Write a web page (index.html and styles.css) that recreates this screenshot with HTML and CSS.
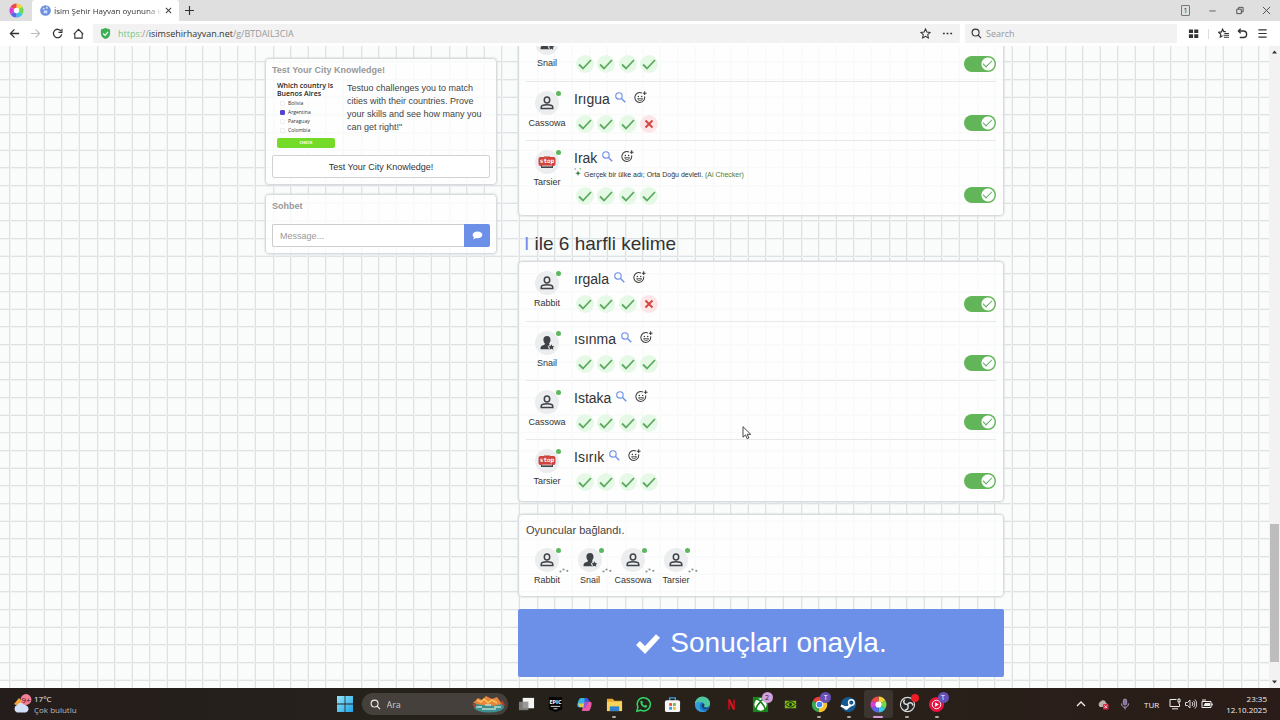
FILE: index.html
```html
<!DOCTYPE html>
<html lang="tr">
<head>
<meta charset="utf-8">
<title>İsim Şehir Hayvan</title>
<link rel="stylesheet" href="styles.css">
</head>
<body>
<svg class="sprite" aria-hidden="true">
  <symbol id="check" viewBox="0 0 18 18"><path d="M3 9.5l4 4L15 5" fill="none" stroke="#5cab5f" stroke-width="1.8"/></symbol>
  <symbol id="cross" viewBox="0 0 18 18"><path d="M5.5 5.5l7 7M12.500 5.500l-7 7" fill="none" stroke="#d0473f" stroke-width="1.900"/></symbol>
  <symbol id="lens" viewBox="0 0 12 12"><circle cx="4.300" cy="4.300" r="3.500" fill="none" stroke="#6f8fe8" stroke-width="1.200"/><path d="M6.800 6.800l4.400 4.400" stroke="#6f8fe8" stroke-width="1.500"/></symbol>
  <symbol id="smile" viewBox="0 0 14 14"><g fill="none" stroke="#3b3b3b" stroke-width="1.100"><path d="M8.500 2.200A5.300 5.300 0 1 0 11.400 5.800"/><path d="M3.800 8.300c1 2.500 4.600 2.500 5.600 0z" stroke-width=".900"/><path d="M11.500.300v4M9.500 2.300h4"/></g><circle cx="4.700" cy="5.800" r=".800" fill="#3b3b3b"/><circle cx="8.300" cy="5.800" r=".800" fill="#3b3b3b"/></symbol>
  <symbol id="person" viewBox="0 0 24 24"><g fill="none" stroke="#3f4347" stroke-width="1.500"><ellipse cx="12" cy="9" rx="2.700" ry="3"/><path d="M6.200 17.500v-1.300c0-3.400 11.600-3.400 11.600 0v1.300z"/></g></symbol>
  <symbol id="star-person" viewBox="0 0 24 24"><path d="M12 5c-2.300 0-3.700 1.600-3.600 4 .1 1.600.7 2.500 1.400 3.200.2 1.300-.4 1.700-1.800 2.100-1.900.6-2.500 1.500-2.500 3.900h8.600l-1.400-3 2-1.300c-.4-.3-.6-.8-.5-1.700.8-.8 1.300-1.800 1.300-3.200C15.500 6.600 14.300 5 12 5z" fill="#3f4347"/><path d="M16.400 13.200l.9 1.900 2.100.3-1.500 1.400.4 2-1.900-1-1.900 1 .4-2-1.500-1.400 2.100-.3z" fill="#3f4347"/></symbol>
  <symbol id="stop" viewBox="0 0 24 24"><path d="M6 14h12v4H6z" fill="#40464c"/><path d="M9 6.500h6v2H9z" fill="#b83c36"/><rect x="3.500" y="7" width="17" height="9" rx="2" fill="#d0443d"/><path d="M7 16h10" stroke="#fff" stroke-width=".700"/><text x="12" y="13" text-anchor="middle" font-family="DejaVu Sans Mono, monospace" font-weight="bold" font-size="6" fill="#fff">stop</text></symbol>
  <symbol id="sparkle" viewBox="0 0 8 9"><path d="M4 2.500l.800 2 2 .800-2 .800-.8 2-.8-2-2-.8 2-.8z" fill="#3a7d44"/><path d="M.500 1h1.500M5.500.800H7M1.200.300v1.400M6.200 0v1.500" stroke="#6fb55c" stroke-width=".700"/></symbol>
  <symbol id="typing" viewBox="0 0 10 5"><circle cx="1.500" cy="3.500" r="1.100"/><circle cx="4.500" cy="1.500" r="1.100"/><circle cx="8.300" cy="2.800" r="1.100"/></symbol>
  <symbol id="swirl" viewBox="0 0 16 16"><g fill="none" stroke-width="5"><path d="M8 3a5 5 0 0 1 4.300 2.500" stroke="#f3d23b"/><path d="M12.300 5.500a5 5 0 0 1 0 5" stroke="#71d84f"/><path d="M12.300 10.500A5 5 0 0 1 8 13" stroke="#34c7e6"/><path d="M8 13a5 5 0 0 1-4.300-2.500" stroke="#5b66e8"/><path d="M3.700 10.500a5 5 0 0 1 0-5" stroke="#d43fd8"/><path d="M3.700 5.500A5 5 0 0 1 8 3" stroke="#f0484d"/></g><circle cx="8" cy="8" r="2.900" fill="#fff"/></symbol>
  <symbol id="glass" viewBox="0 0 12 12"><circle cx="5" cy="5" r="3.800" fill="none" stroke="currentColor" stroke-width="1.200"/><path d="M7.800 7.800l3.200 3.200" stroke="currentColor" stroke-width="1.300"/></symbol>
</svg>

<header class="tabs">
  <div class="brand"><svg class="i15"><use href="#swirl"/></svg></div>
  <div class="tab">
    <svg class="i11" viewBox="0 0 12 12"><circle cx="6" cy="6" r="5.800" fill="#6d8fe0"/><path d="M3 3h2v2H3zM6.500 2h2v2h-2zM4 6h4v3H4z" fill="#cfdcfa"/></svg>
    <span class="tab-title">İsim Şehir Hayvan oyununa k</span>
    <button class="plain" aria-label="Sekmeyi kapat"><svg class="i7" viewBox="0 0 8 8"><path d="M1 1l6 6M7 1L1 7" stroke="#444" stroke-width="1.200"/></svg></button>
  </div>
  <button class="plain new-tab" aria-label="Yeni sekme"><svg class="i9" viewBox="0 0 10 10"><path d="M5 0v10M0 5h10" stroke="#333" stroke-width="1.300"/></svg></button>
  <div class="window-buttons">
    <span class="tab-count">1</span>
    <button class="plain" aria-label="Küçült"><svg class="i9" viewBox="0 0 10 10"><path d="M1.500 5.500h7" stroke="#555"/></svg></button>
    <button class="plain" aria-label="Geri yükle"><svg class="i9" viewBox="0 0 10 10"><path d="M2 3.500h5v5H2zM4 3.500v-2h5v5H7" fill="none" stroke="#444"/></svg></button>
    <button class="plain" aria-label="Kapat"><svg class="i9" viewBox="0 0 10 10"><path d="M1 1l8 8M9 1L1 9" stroke="#444"/></svg></button>
  </div>
</header>

<nav class="toolbar">
  <div class="nav-buttons">
    <button class="plain" aria-label="Geri"><svg class="i11" viewBox="0 0 12 12"><path d="M6 1.500L1.500 6 6 10.500M1.500 6H11" fill="none" stroke="#333" stroke-width="1.400"/></svg></button>
    <button class="plain" aria-label="İleri"><svg class="i11" viewBox="0 0 12 12"><path d="M6 1.500L10.500 6 6 10.500M10.500 6H1" fill="none" stroke="#bbb" stroke-width="1.200"/></svg></button>
    <button class="plain" aria-label="Yenile"><svg class="i11" viewBox="0 0 12 12"><path d="M10 3.500A4.600 4.600 0 1 0 10.600 7" fill="none" stroke="#333" stroke-width="1.400"/><path d="M10.900.800v4H7" fill="none" stroke="#333" stroke-width="1.200"/></svg></button>
    <button class="plain" aria-label="Ana sayfa"><svg class="i11" viewBox="0 0 12 12"><path d="M2 5.500L6 1.500l4 4V11H2zM.800 6.600L2 5.500M11.200 6.600L10 5.500" fill="none" stroke="#333" stroke-width="1.200"/></svg></button>
  </div>
  <div class="address">
    <svg class="i11" viewBox="0 0 12 12"><path d="M6 0l5 1.500V6c0 3-2 5-5 6-3-1-5-3-5-6V1.500z" fill="#3cb054"/><path d="M3.500 6l2 2 3.300-3.800" fill="none" stroke="#fff" stroke-width="1.300"/></svg>
    <span class="url"><span class="scheme">https:</span>//<b>isimsehirhayvan.net</b>/g/BTDAIL3CIA</span>
    <button class="plain" aria-label="Yer imi"><svg class="i11" viewBox="0 0 12 12"><path d="M6 1l1.500 3.400 3.600.4-2.700 2.400.8 3.600L6 9l-3.200 1.800.8-3.600L.900 4.800l3.600-.4z" fill="none" stroke="#333" stroke-width="1.100"/></svg></button>
    <button class="plain" aria-label="Diğer"><svg class="i11" viewBox="0 0 12 12"><path d="M1 6h2M5 6h2M9 6h2" stroke="#333" stroke-width="1.500"/></svg></button>
  </div>
  <label class="search"><svg class="i11"><use href="#glass"/></svg><input type="text" placeholder="Search" aria-label="Search"></label>
  <div class="tools">
    <button class="plain" aria-label="Uygulamalar"><svg class="i11" viewBox="0 0 12 12"><path d="M1 1.500h4.500V5.500H1zM6.800 1.500h4.400V5.500H6.800zM1 6.800h4.500v4H1zM6.800 6.800h4.400v4H6.800z" fill="#333"/></svg></button>
    <span class="divider"></span>
    <button class="plain" aria-label="Sık kullanılanlar"><svg class="i11" viewBox="0 0 12 12"><path d="M8.500 4H6.300L5 1.300 3.800 4.300.800 4.700 3 6.800 2.500 10l2.500-1.500" fill="none" stroke="#333" stroke-width="1.300"/><path d="M7 6h5M6 8h6M6.500 10H12" stroke="#333" stroke-width="1.100"/></svg></button>
    <button class="plain" aria-label="Geri al"><svg class="i11" viewBox="0 0 12 12"><path d="M4 .800L1.500 3.300 4 5.800M1.500 3.300H7a3.500 3.500 0 0 1 0 7H3" fill="none" stroke="#333" stroke-width="1.500"/></svg></button>
    <button class="plain" aria-label="Menü"><svg class="i11" viewBox="0 0 12 12"><path d="M1.500 2h9M1.500 6h9M1.500 10h9" stroke="#333" stroke-width="1.300"/></svg></button>
  </div>
</nav>

<div class="viewport">
  <div class="page">
    <div class="container">
      <aside class="side">
        <section class="card side-card">
          <h2 class="side-title">Test Your City Knowledge!</h2>
          <div class="promo">
            <div class="quiz">
              <p class="quiz-title">Which country is Buenos Aires</p>
              <label><input type="checkbox">Bolivia</label>
              <label><input type="checkbox" checked>Argentina</label>
              <label><input type="checkbox">Paraguay</label>
              <label><input type="checkbox">Colombia</label>
              <button class="quiz-check">CHECK</button>
            </div>
            <p class="promo-text">Testuo challenges you to match cities with their countries. Prove your skills and see how many you can get right!"</p>
          </div>
          <button class="outline">Test Your City Knowledge!</button>
        </section>
        <section class="card side-card">
          <h2 class="side-title">Sohbet</h2>
          <form class="chat">
            <input type="text" placeholder="Message..." aria-label="Message">
            <button type="button" aria-label="Gönder"><svg class="i11" viewBox="0 0 12 12"><path d="M6 1.500c3 0 5.300 1.600 5.300 3.800S9 9 6 9c-.6 0-1.200 0-1.700-.2C3.400 9.600 2.300 10 1 10c.6-.6 1-1.300 1.100-2C1.200 7.300.700 6.400.700 5.300.700 3.100 3 1.500 6 1.500z" fill="#fff"/></svg></button>
          </form>
        </section>
      </aside>

      <main class="main">
        <section class="card answers scrolled">
          <article class="row">
            <div class="player"><div class="avatar"><svg><use href="#star-person"/></svg><i class="online"></i></div>Snail</div>
            <div class="answer"><h3></h3>
              <div class="votes"><svg class="yes"><use href="#check"/></svg><svg class="yes"><use href="#check"/></svg><svg class="yes"><use href="#check"/></svg><svg class="yes"><use href="#check"/></svg></div></div>
            <input class="toggle" type="checkbox" checked aria-label="Snail">
          </article>
          <article class="row">
            <div class="player"><div class="avatar"><svg><use href="#person"/></svg><i class="online"></i></div>Cassowa</div>
            <div class="answer"><h3>Irıgua <svg class="lens"><use href="#lens"/></svg><svg class="smile"><use href="#smile"/></svg></h3>
              <div class="votes"><svg class="yes"><use href="#check"/></svg><svg class="yes"><use href="#check"/></svg><svg class="yes"><use href="#check"/></svg><svg class="no"><use href="#cross"/></svg></div></div>
            <input class="toggle" type="checkbox" checked aria-label="Cassowa">
          </article>
          <article class="row">
            <div class="player"><div class="avatar"><svg><use href="#stop"/></svg><i class="online"></i></div>Tarsier</div>
            <div class="answer"><h3>Irak <svg class="lens"><use href="#lens"/></svg><svg class="smile"><use href="#smile"/></svg></h3>
              <p class="note"><svg><use href="#sparkle"/></svg>Gerçek bir ülke adı; Orta Doğu devleti. <span>(Ai Checker)</span></p>
              <div class="votes"><svg class="yes"><use href="#check"/></svg><svg class="yes"><use href="#check"/></svg><svg class="yes"><use href="#check"/></svg><svg class="yes"><use href="#check"/></svg></div></div>
            <input class="toggle" type="checkbox" checked aria-label="Tarsier">
          </article>
        </section>

        <h2 class="category"><span>I</span> ile 6 harfli kelime</h2>

        <section class="card answers">
          <article class="row">
            <div class="player"><div class="avatar"><svg><use href="#person"/></svg><i class="online"></i></div>Rabbit</div>
            <div class="answer"><h3>ırgala <svg class="lens"><use href="#lens"/></svg><svg class="smile"><use href="#smile"/></svg></h3>
              <div class="votes"><svg class="yes"><use href="#check"/></svg><svg class="yes"><use href="#check"/></svg><svg class="yes"><use href="#check"/></svg><svg class="no"><use href="#cross"/></svg></div></div>
            <input class="toggle" type="checkbox" checked aria-label="Rabbit">
          </article>
          <article class="row">
            <div class="player"><div class="avatar"><svg><use href="#star-person"/></svg><i class="online"></i></div>Snail</div>
            <div class="answer"><h3>ısınma <svg class="lens"><use href="#lens"/></svg><svg class="smile"><use href="#smile"/></svg></h3>
              <div class="votes"><svg class="yes"><use href="#check"/></svg><svg class="yes"><use href="#check"/></svg><svg class="yes"><use href="#check"/></svg><svg class="yes"><use href="#check"/></svg></div></div>
            <input class="toggle" type="checkbox" checked aria-label="Snail">
          </article>
          <article class="row">
            <div class="player"><div class="avatar"><svg><use href="#person"/></svg><i class="online"></i></div>Cassowa</div>
            <div class="answer"><h3>Istaka <svg class="lens"><use href="#lens"/></svg><svg class="smile"><use href="#smile"/></svg></h3>
              <div class="votes"><svg class="yes"><use href="#check"/></svg><svg class="yes"><use href="#check"/></svg><svg class="yes"><use href="#check"/></svg><svg class="yes"><use href="#check"/></svg></div></div>
            <input class="toggle" type="checkbox" checked aria-label="Cassowa">
          </article>
          <article class="row">
            <div class="player"><div class="avatar"><svg><use href="#stop"/></svg><i class="online"></i></div>Tarsier</div>
            <div class="answer"><h3>Isırık <svg class="lens"><use href="#lens"/></svg><svg class="smile"><use href="#smile"/></svg></h3>
              <div class="votes"><svg class="yes"><use href="#check"/></svg><svg class="yes"><use href="#check"/></svg><svg class="yes"><use href="#check"/></svg><svg class="yes"><use href="#check"/></svg></div></div>
            <input class="toggle" type="checkbox" checked aria-label="Tarsier">
          </article>
        </section>

        <section class="card connected">
          <p>Oyuncular bağlandı.</p>
          <div class="players">
            <div class="player"><div class="avatar"><svg><use href="#person"/></svg><i class="online"></i><svg class="typing"><use href="#typing"/></svg></div>Rabbit</div>
            <div class="player"><div class="avatar"><svg><use href="#star-person"/></svg><i class="online"></i><svg class="typing"><use href="#typing"/></svg></div>Snail</div>
            <div class="player"><div class="avatar"><svg><use href="#person"/></svg><i class="online"></i><svg class="typing"><use href="#typing"/></svg></div>Cassowa</div>
            <div class="player"><div class="avatar"><svg><use href="#person"/></svg><i class="online"></i><svg class="typing"><use href="#typing"/></svg></div>Tarsier</div>
          </div>
        </section>

        <button class="confirm"><svg viewBox="0 0 26 22"><path d="M3 11l7 7L23 4" fill="none" stroke="#fff" stroke-width="5.500"/></svg>Sonuçları onayla.</button>
      </main>
    </div>
  </div>
  <div class="scrollbar">
    <svg viewBox="0 0 11 12"><path d="M3 7.500h5L5.500 4.500z" fill="#333"/></svg>
    <span class="thumb"></span>
    <svg viewBox="0 0 11 12"><path d="M3 4.500h5L5.500 7.500z" fill="#333"/></svg>
  </div>
</div>

<svg class="cursor" viewBox="0 0 10 14"><path d="M1 .700v10.500l2.500-2.300 1.700 3.800 1.600-.7-1.600-3.700h3.500z" fill="#fff" stroke="#333" stroke-width=".900"/></svg>

<footer class="taskbar">
  <div class="weather">
    <svg viewBox="0 0 20 20"><path d="M7 4L2 10l6 3 5-3z" fill="#f0a33c"/><path d="M5 18.500a4 4 0 0 1 .2-7.500 5 5 0 0 1 9 .5 3.700 3.700 0 0 1-.2 7z" fill="#d3e0fa"/><circle cx="14" cy="5.500" r="5.400" fill="#f58094"/><text x="14" y="8.500" text-anchor="middle" font-size="8" fill="#3a1a20">9+</text></svg>
    <div>17°C<br><span>Çok bulutlu</span></div>
  </div>
  <div class="dock">
    <button class="plain start" aria-label="Başlat"><svg viewBox="0 0 16 16"><defs><linearGradient id="win" x2="1" y2="1"><stop stop-color="#8fe6fb"/><stop offset="1" stop-color="#21a2e6"/></linearGradient></defs><path d="M0 0h7.600v7.600H0zM8.400 0H16v7.600H8.400zM0 8.400h7.600V16H0zM8.400 8.400H16V16H8.400z" fill="url(#win)"/></svg></button>
    <label class="task-search"><svg class="i11"><use href="#glass"/></svg><input type="text" placeholder="Ara" aria-label="Ara"><svg class="art" viewBox="0 0 36 18"><ellipse cx="19" cy="12" rx="15" ry="5.500" fill="#3e8e92"/><path d="M3 8l5-5 4 2 4-4 6 3 5-2 5 7-10 2-10-1z" fill="#e8843c"/><path d="M7 5l4 2 3-3 4 4 4-3 5 3" stroke="#f5c25c" stroke-width="1.500" fill="none"/><path d="M6 12h6M15 10h6M24 12h7M12 14h14" stroke="#b6e0cf" stroke-width="1.500"/><path d="M3 9l3 3M32 6l2 5" stroke="#bb3d2b" stroke-width="2"/></svg></label>
    <div class="apps">
      <span><svg viewBox="0 0 18 18"><path d="M5 2h12v11H5z" fill="#f4f4f4"/><path d="M1 6h10v9H1z" fill="#8a8a8a" opacity=".85"/></svg></span>
      <span><svg viewBox="0 0 18 18"><path d="M2 1h14v13l-7 3-7-3z" fill="#050505"/><text x="9" y="8.500" text-anchor="middle" font-size="6" font-weight="bold" fill="#fff">EPIC</text><path d="M4 11h10M7 13.500h4" stroke="#ddd"/></svg></span>
      <span><svg viewBox="0 0 18 18"><path d="M6 2h6l-3 10H4c-3 0-3-2-2-5 1-4 2-5 4-5z" fill="#32b5e7"/><path d="M12 16H6L9 6h5c3 0 3 2 2 5-1 4-2 5-4 5z" fill="#e95aa5"/><path d="M2 8l2 4h5l1-4z" fill="#e4c844"/><path d="M9 2h3l3 4H9z" fill="#3758d7"/><path d="M9 6h4l-3 7-2-1z" fill="#9a50d7"/></svg></span>
      <span class="open"><svg viewBox="0 0 18 18"><path d="M1 3h6l2 2h8v11H1z" fill="#e7a92e"/><path d="M1 6h16v10H1z" fill="#fbd35a"/><path d="M4 11h10v5H4z" fill="#2f82cf"/></svg></span>
      <span><svg viewBox="0 0 18 18"><path d="M2 16l1-4a7 7 0 1 1 3 3z" fill="none" stroke="#2fd566" stroke-width="1.600"/><path d="M6 5l1.500 0 1 2-.8 1c.6 1 1.300 1.600 2.400 2.200l1-.9 1.900 1c0 2-2 2.400-3.500 1.700C7 10.800 5 8 6 5z" fill="#2fd566"/></svg></span>
      <span><svg viewBox="0 0 18 18"><path d="M6 5V2h6v3" fill="none" stroke="#3aa0e4" stroke-width="1.500"/><rect x="1" y="4.500" width="16" height="12.500" rx="2" fill="#f6f6f6"/><path d="M5.500 7.500h3v3h-3z" fill="#e8533f"/><path d="M9.500 7.500h3v3h-3z" fill="#77b843"/><path d="M5.500 11.500h3v3h-3z" fill="#35a1df"/><path d="M9.500 11.500h3v3h-3z" fill="#f4ba36"/></svg></span>
      <span><svg viewBox="0 0 18 18"><circle cx="9" cy="9" r="8" fill="#1b76c8"/><path d="M1 9a8 8 0 0 1 16-1c0 4-4 5-7 3 2-3-1-5-4-4-3 0-4 1-5 2z" fill="#4fc8a0"/><path d="M1 9c1-3 5-4 8-2-3 1-4 4-2 7 2 2 5 3 8 1-5 4-14 2-14-6z" fill="#329bd8"/><path d="M9.500 8c2 0 2 2 1 3.500 1 1 3 1.500 5.500.5-2 2.500-6.500 2.500-7.500-.5-.5-1.500 0-3 1-3.500z" fill="#15406e"/></svg></span>
      <span><svg class="small" viewBox="0 0 18 18"><path d="M5.500 2v14M12.500 2v14" stroke="#a90d16" stroke-width="3"/><path d="M5.500 2l7 14" stroke="#d51422" stroke-width="3"/></svg></span>
      <span><svg viewBox="0 0 18 18"><path d="M1 1h16v16H1z" fill="#188318"/><circle cx="9" cy="9" r="6.500" fill="#fff"/><path d="M4 14c1-4 3-6 5-8 2 2 4 4 5 8M5 3.500c2 0 3 1 4 2 1-1 2-2 4-2" fill="none" stroke="#188318" stroke-width="1.700"/></svg><b class="badge pink">2</b></span>
      <span><svg viewBox="0 0 18 18"><path d="M3 5h12v8H3z" fill="#79b51c"/><path d="M4 9c3-4 7-4 10 0-3 4-7 3-10 0z" fill="none" stroke="#17210a"/><circle cx="9" cy="9" r="1.500" fill="#17210a"/></svg></span>
      <span class="open"><svg viewBox="0 0 18 18"><path d="M9 9L2 5a8 8 0 0 1 14 0z" fill="#e74335"/><path d="M9 9L2 5a8 8 0 0 0 6 12z" fill="#35a853"/><path d="M9 9l7-4a8 8 0 0 1-8 12z" fill="#fac02e"/><circle cx="9" cy="9" r="4" fill="#fff"/><circle cx="9" cy="9" r="3" fill="#4285f4"/></svg><b class="badge">T</b></span>
      <span class="open"><svg viewBox="0 0 18 18"><circle cx="9" cy="9" r="8" fill="#145a91"/><path d="M1 10l6 3 5-4" stroke="#fff" stroke-width="2.500" fill="none"/><circle cx="12" cy="7" r="3" fill="#145a91" stroke="#fff" stroke-width="1.500"/><circle cx="6.500" cy="12.500" r="2" fill="#fff"/></svg></span>
      <span class="open active"><svg><use href="#swirl"/></svg></span>
      <span class="open"><svg viewBox="0 0 18 18"><circle cx="9" cy="9" r="7.500" fill="#262626" stroke="#ddd" stroke-width="1.200"/><path d="M9 9c-4 0-5-3-3-5M9 9c2-3 5-2 6 1M9 9c2 3 0 6-3 6" stroke="#ddd" stroke-width="1.600" fill="none"/></svg><b class="badge red"></b></span>
      <span class="open"><svg viewBox="0 0 18 18"><circle cx="9" cy="9" r="8" fill="#e8123f"/><circle cx="9" cy="9" r="4.500" fill="none" stroke="#fff"/><path d="M7.500 6.500v5l4-2.500z" fill="#fff"/></svg><b class="badge">T</b></span>
    </div>
  </div>
  <div class="tray">
    <svg viewBox="0 0 12 12"><path d="M2 8l4-4 4 4" fill="none" stroke="#eee" stroke-width="1.300"/></svg>
    <svg class="cloud" viewBox="0 0 12 12"><path d="M3 9a3 3 0 0 1 0-5c2-3 6-2 6 1 3 1 2 4 0 4z" fill="#bbb2ac"/><rect x="6" y="6" width="5.500" height="5.500" rx="1" fill="#dc2944"/><path d="M7.500 7.500l2.500 2.500M10 7.500L7.500 10" stroke="#fff" stroke-width=".800"/></svg>
    <svg class="mic" viewBox="0 0 12 12"><rect x="4.300" y="1" width="3.400" height="6" rx="1.700" fill="#8273a5" stroke="#c6b9df" stroke-width=".600"/><path d="M2.500 5.500c0 5 7 5 7 0M6 9v2.500" fill="none" stroke="#b2a4cc"/></svg>
    <span class="lang">TUR</span>
    <svg viewBox="0 0 12 12"><path d="M7.500 1.500H1v7h9.500V6M3 10.800h6M9 1h2v3H9zM10 4v2" fill="none" stroke="#eee"/></svg>
    <svg class="sound" viewBox="0 0 12 12"><path d="M.500 4.500h2L5 2v8L2.500 7.500h-2zM7 4c1 1 1 3 0 4M8.500 2.800c1.700 2 1.700 4.400 0 6.400M10 1.500c2.300 3 2.300 6 0 9" fill="none" stroke="#eee" stroke-width=".900"/></svg>
    <svg class="power" viewBox="0 0 12 12"><path d="M1 3.500h9v6H1z" fill="none" stroke="#eee"/><path d="M11 5.500v2" stroke="#eee" stroke-width="1.500"/><path d="M4 5h5v3H2.500z" fill="#eee"/><path d="M2 1v3M4 1v3" stroke="#eee"/></svg>
    <div class="clock">23:35<br>12.10.2025</div>
  </div>
</footer>
</body>
</html>
```
FILE: styles.css
```css
* { box-sizing: border-box; }
html, body { height: 100%; }
body {
  margin: 0;
  display: flex;
  flex-direction: column;
  overflow: hidden;
  color: #333;
  font: 9px "Liberation Sans", Arial, sans-serif;
}
h2, h3, p { margin: 0; font-weight: normal; }
svg { display: block; flex: none; }
button, input { font: inherit; color: inherit; }
input { min-width: 0; }
.sprite { position: absolute; width: 0; height: 0; }
.plain { border: 0; background: none; padding: 0; display: grid; place-items: center; }
.i7 { width: 7px; height: 7px; }
.i9 { width: 9px; height: 9px; }
.i11 { width: 11px; height: 11px; }
.i15 { width: 15px; height: 15px; }

/* Browser chrome */
.tabs, .toolbar { display: flex; flex: none; font-family: "Open Sans", "Noto Sans", sans-serif; }
.tabs { height: 21px; background: #dfdfdf; align-items: center; }
.brand { width: 32px; display: grid; place-items: center; }
.tab {
  height: 100%; width: 147px; background: #fff; border-radius: 3px 3px 0 0;
  display: flex; align-items: center; gap: 3px; padding: 0 8px;
}
.tab-title {
  flex: 1; white-space: nowrap; font-size: 8px; color: #333;
  -webkit-mask-image: linear-gradient(90deg, #000 85%, transparent);
  mask-image: linear-gradient(90deg, #000 85%, transparent);
}
.new-tab { width: 21px; }
.window-buttons { margin-left: auto; display: flex; align-items: center; gap: 18px; padding-right: 9px; }
.tab-count { width: 9px; border: 1px solid #777; border-radius: 1px; font-size: 7px; line-height: 9px; text-align: center; }
.toolbar { height: 25px; background: #fff; align-items: center; padding-right: 12px; }
.nav-buttons { display: flex; justify-content: space-between; width: 93px; padding: 0 9px; }
.address { flex: 1; height: 19px; background: #f2f2f2; display: flex; align-items: center; gap: 11px; padding: 0 7px; }
.url { flex: 1; margin-left: -4px; font-size: 9px; color: #999; }
.url b { font-weight: normal; color: #333; }
.scheme { color: #76c788; }
.search { width: 212px; height: 19px; margin-left: 5px; padding: 0 6px; background: #f2f2f2; display: flex; align-items: center; gap: 4px; }
.search input { flex: 1; border: 0; padding: 0; background: none; font-size: 9px; }
.search input::placeholder { color: #999; }
.tools { width: 80px; margin-left: 11px; display: flex; justify-content: space-between; align-items: center; }
.divider { width: 1px; height: 10px; background: #ddd; }

/* Squared paper page */
.viewport { flex: 1; min-height: 0; display: flex; }
.page {
  --line: #dde2e3;
  --soft: #f0f2f3;
  flex: 1; overflow: hidden; background-color: #fafbfb;
  background-image:
    linear-gradient(90deg, transparent 9px, var(--line) 9px 10px, var(--soft) 10px 11px, transparent 11px 26px, var(--line) 26px 27px, var(--soft) 27px 28px, transparent 28px 43px, var(--soft) 43px 44px, var(--line) 44px 45px, transparent 45px 61px, var(--line) 61px 62px, var(--soft) 62px 63px, transparent 63px 78px, var(--soft) 78px 79px, var(--line) 79px 80px, transparent 80px),
    linear-gradient(transparent 15px, var(--line) 15px 16px, var(--soft) 16px 17px, transparent 17px 33px, var(--line) 33px 34px, var(--soft) 34px 35px, transparent 35px 50px, var(--soft) 50px 51px, var(--line) 51px 52px, transparent 52px);
  background-size: 88px 100%, 100% 53px;
}
.container { max-width: 739px; margin: 0 auto; display: flex; gap: 21px; align-items: flex-start; }
.card { background: rgba(255, 255, 255, .78); border: 1px solid #d8dbdd; border-radius: 4px; box-shadow: 0 0 1px 1px rgba(220, 223, 225, .6); }
.scrollbar { width: 11px; background: #f2f2f2; display: flex; flex-direction: column; }
.scrollbar svg { width: 11px; height: 12px; }
.scrollbar::before { order: 1; content: ""; flex: 466; }
.scrollbar svg:first-child { order: 0; }
.thumb { order: 2; flex: 138; margin: 0 1px; background: #bdbdbd; }
.scrollbar::after { order: 3; content: ""; flex: 14; }
.scrollbar svg:last-child { order: 4; }

/* Side column */
.side { width: 232px; padding-top: 12px; display: flex; flex-direction: column; gap: 9px; }
.side-card { padding: 5px 6px 6px; }
.side-title { font-size: 9px; font-weight: bold; color: #999; line-height: 12px; }
.promo { display: flex; gap: 12px; padding: 5px 0 7px 5px; }
.quiz { width: 58px; padding-top: 1px; font: 5px/9px "Open Sans", "Noto Sans", sans-serif; }
.quiz-title { font-size: 7px; font-weight: 600; line-height: 8px; color: #222; margin-bottom: 1px; }
.quiz label { display: flex; align-items: center; gap: 3px; padding-left: 3px; }
.quiz input { appearance: none; width: 5px; height: 5px; margin: 0; border: 1px solid #eee; border-radius: 1px; }
.quiz input:checked { background: #5145cd; border-color: #5145cd; }
.quiz-check { display: block; width: 100%; height: 10px; margin-top: 3px; padding: 0; border: 0; border-radius: 2px; background: #74dc28; color: #fff; font-weight: bold; font-size: 4px; line-height: 10px; }
.promo-text { flex: 1; line-height: 13px; color: #444; padding-top: 1px; }
.outline { display: block; width: 100%; height: 23px; padding: 0; background: #fff; border: 1px solid #d2d2d2; border-radius: 2px; }
.chat { display: flex; height: 23px; margin-top: 12px; }
.chat input { flex: 1; border: 1px solid #ccc; border-right: 0; border-radius: 2px 0 0 2px; background: #fff; padding: 0 7px; font-size: 9px; }
.chat input::placeholder { color: #999; }
.chat button { width: 26px; border: 0; border-radius: 0 2px 2px 0; background: #6c8fe8; display: grid; place-items: center; padding: 0; }

/* Answers */
.main { flex: 1; min-width: 0; }
.answers { padding: 0 7px 3px; }
.scrolled { margin-top: -25px; }
.row { display: flex; gap: 6px; min-height: 59px; }
.row + .row { border-top: 1px solid #e6e8e9; }
.player { width: 42px; padding-top: 9px; display: flex; flex-direction: column; align-items: center; gap: 2px; line-height: 12px; }
.avatar { position: relative; width: 24px; height: 24px; border-radius: 50%; background: #ebedee; }
.avatar svg { width: 24px; height: 24px; }
.online { position: absolute; right: -2px; top: 0; width: 5px; height: 5px; border-radius: 50%; background: #5cb85c; }
.avatar .typing { position: absolute; right: -10px; bottom: -1px; width: 10px; height: 5px; fill: #8c949b; }
.answer { flex: 1; padding: 7px 0; display: flex; flex-direction: column; }
.answer h3 { display: flex; align-items: center; min-height: 20px; font-size: 14px; line-height: 20px; }
.lens { width: 11px; height: 11px; margin: 0 8px 4px 5px; }
.smile { width: 13px; height: 13px; margin-bottom: 4px; }
.note { font-size: 7px; line-height: 12px; color: #333; }
.note svg { display: inline-block; width: 8px; height: 9px; margin-right: 2px; }
.note span { color: #4c7d3a; }
.votes { display: flex; justify-content: space-between; width: 82px; margin: 6px 0 0 2px; }
.votes svg { width: 18px; height: 18px; border-radius: 50%; }
.yes { background: #e6f9e6; }
.no { background: #fde6e8; }
.toggle {
  appearance: none; align-self: flex-end; width: 32px; height: 16px; margin: 0 0 9px; border-radius: 8px;
  background: radial-gradient(circle at 24px 8px, #fff 6px, #62b558 7px);
  display: grid; justify-content: end;
}
.toggle::after { content: ""; width: 8px; height: 4px; margin: 4px 4px 0 0; border: solid #5cab5f; border-width: 0 0 1px 1px; transform: rotate(-45deg); }
.category { padding: 16px 6px 5px; font-size: 19px; line-height: 24px; }
.category span { color: #6c8fe8; }
.connected { margin-top: 12px; padding: 7px 7px 10px; }
.connected p { font-size: 11px; line-height: 16px; color: #444; }
.players { display: flex; gap: 1px; padding-top: 1px; }
.confirm {
  width: 100%; height: 68px; margin-top: 12px; border: 0; border-radius: 2px; background: #6c8fe8; color: #fff;
  font-size: 28px; display: flex; align-items: center; justify-content: center; gap: 9px;
}
.confirm svg { width: 26px; height: 22px; }
.cursor { position: absolute; left: 742px; top: 426px; width: 10px; height: 14px; }

/* Taskbar */
.taskbar {
  flex: none; height: 32px; padding: 0 13px 0 12px; background: linear-gradient(90deg, #251d1b, #25211b 30%, #28211a 60%, #2a1c18);
  color: #eee; font-family: "Open Sans", "Noto Sans", sans-serif; font-size: 8px;
  display: grid; grid-template-columns: 1fr auto 1fr; align-items: center;
}
.weather { display: flex; align-items: center; gap: 2px; line-height: 11px; }
.weather span { color: #bbb; }
.weather svg { width: 20px; height: 20px; }
.dock { display: flex; align-items: center; padding-left: 6px; }
.start { width: 22px; }
.start svg { width: 16px; height: 16px; }
.task-search { width: 146px; height: 22px; margin: 0 4px 0 6px; padding: 0 2px 0 8px; border-radius: 11px; background: #45403b; display: flex; align-items: center; gap: 6px; }
.task-search input { flex: 1; border: 0; padding: 0; background: none; font-size: 9px; }
.task-search input::placeholder { color: #ccc; }
.task-search .art { width: 36px; height: 18px; }
.apps { width: 440px; display: grid; grid-template-columns: repeat(15, 1fr); }
.apps span { position: relative; height: 28px; display: grid; place-items: center; }
.apps svg { width: 17px; height: 17px; }
.apps .small { width: 13px; height: 13px; }
.open::after { content: ""; position: absolute; bottom: 0; left: calc(50% - 2px); width: 4px; height: 2px; border-radius: 1px; background: #aaa; }
.active { background: #3b342f; border-radius: 3px; }
.active::after { left: calc(50% - 5px); width: 10px; background: #d59be0; }
.badge { position: absolute; right: 3px; top: 2px; width: 11px; height: 11px; border-radius: 50%; background: #6650b5; color: #fff; font-size: 7px; line-height: 11px; text-align: center; font-weight: normal; }
.pink { background: #d3a0dc; color: #222; }
.red { width: 8px; height: 8px; top: 4px; background: #ee1c25; }
.tray { justify-self: end; display: flex; align-items: center; gap: 4px; }
.tray svg { width: 12px; height: 12px; }
.tray .cloud { margin-left: 6px; }
.tray .mic { margin: 0 9px 0 6px; }
.lang { margin-right: 6px; }
.clock { margin-left: 9px; text-align: right; line-height: 11px; }
```
